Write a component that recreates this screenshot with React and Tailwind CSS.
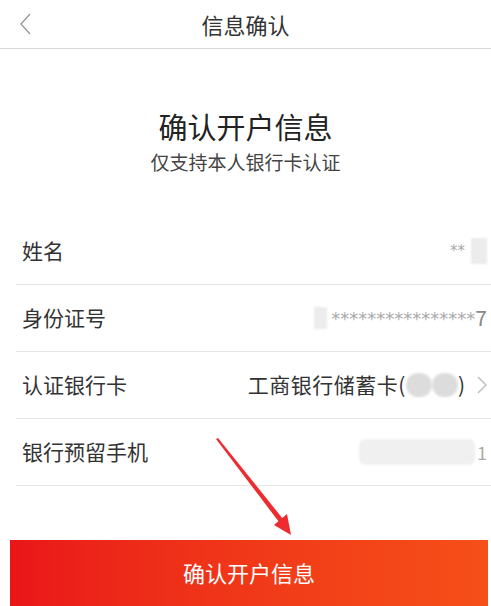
import React from "react";

// 确认开户信息 — bank account confirmation screen
const FONT = { fontFamily: '"Noto Sans CJK SC", "Noto Sans", sans-serif' };
const STAR = { fontFamily: '"DejaVu Sans", sans-serif' };

function Row({ label, children }) {
  return (
    <div className="ml-4 flex h-[67px] items-center border-b border-[#e6e6e6] pl-[6px] pr-1">
      <div className="text-[21px] text-[#333]">{label}</div>
      <div className="ml-auto flex items-center">{children}</div>
    </div>
  );
}

function Blur({ className }) {
  return <span className={"inline-block blur-[1px] " + className} />;
}

export default function App() {
  return (
    <div className="relative h-[606px] w-[491px] overflow-hidden bg-white text-[#333]" style={FONT}>
      <header className="flex h-[49px] items-center border-b border-[#d9d9d9]">
        <div className="flex w-[60px] justify-start pl-[19px]">
          <svg width="12" height="22" viewBox="0 0 12 22" fill="none">
            <path d="M11 1 2 11l9 10" stroke="#9a9a9a" strokeWidth="1.4" />
          </svg>
        </div>
        <div className="flex-1 text-center text-[22px] text-[#333]">信息确认</div>
        <div className="w-[60px]" />
      </header>

      <div className="mt-[57px] text-center text-[29px] leading-[40px] text-[#222]">确认开户信息</div>
      <div className="mt-[3px] text-center text-[19px] leading-[26px] text-[#444]">仅支持本人银行卡认证</div>

      <div className="mt-[43px]">
        <Row label="姓名">
          <span className="text-[15px] text-[#aaa]" style={STAR}>**</span>
          <Blur className="ml-[6px] h-[26px] w-[16px] bg-[#ececec]" />
        </Row>
        <Row label="身份证号">
          <Blur className="mr-[4px] h-[22px] w-[13px] bg-[#ececec]" />
          <span className="text-[18px] text-[#aaa]" style={STAR}>****************</span>
          <span className="text-[21px] text-[#888]">7</span>
        </Row>
        <Row label="认证银行卡">
          <span className="text-[21px] tracking-[0.5px] text-[#333]">工商银行储蓄卡(</span>
          <Blur className="h-[24px] w-[26px] rounded-full bg-[#dcdcdc]" />
          <Blur className="h-[24px] w-[26px] rounded-full bg-[#dcdcdc]" />
          <span className="text-[21px] text-[#333]">)</span>
          <svg className="ml-[12px]" width="10" height="18" viewBox="0 0 10 18" fill="none">
            <path d="M1 1l8 8-8 8" stroke="#bbb" strokeWidth="1.4" />
          </svg>
        </Row>
        <Row label="银行预留手机">
          <Blur className="h-[26px] w-[116px] rounded-[6px] bg-[#f0f0f0]" />
          <span className="ml-[2px] text-[18px] text-[#aaa]">1</span>
        </Row>
      </div>

      <button className="mx-[10px] mt-[54px] flex h-[70px] w-[478px] items-start justify-center bg-gradient-to-r from-[#ea1519] to-[#f64f18] pt-[16px] text-[22px] text-white">
        确认开户信息
      </button>

      {/* annotation arrow */}
      <svg className="pointer-events-none absolute left-0 top-0" width="491" height="606" viewBox="0 0 491 606">
        <polygon points="216,439 218,438 283,519 279,522" fill="#ee2b2f" />
        <polygon points="274,525 287,514 291,535" fill="#ee2b2f" />
      </svg>
    </div>
  );
}
